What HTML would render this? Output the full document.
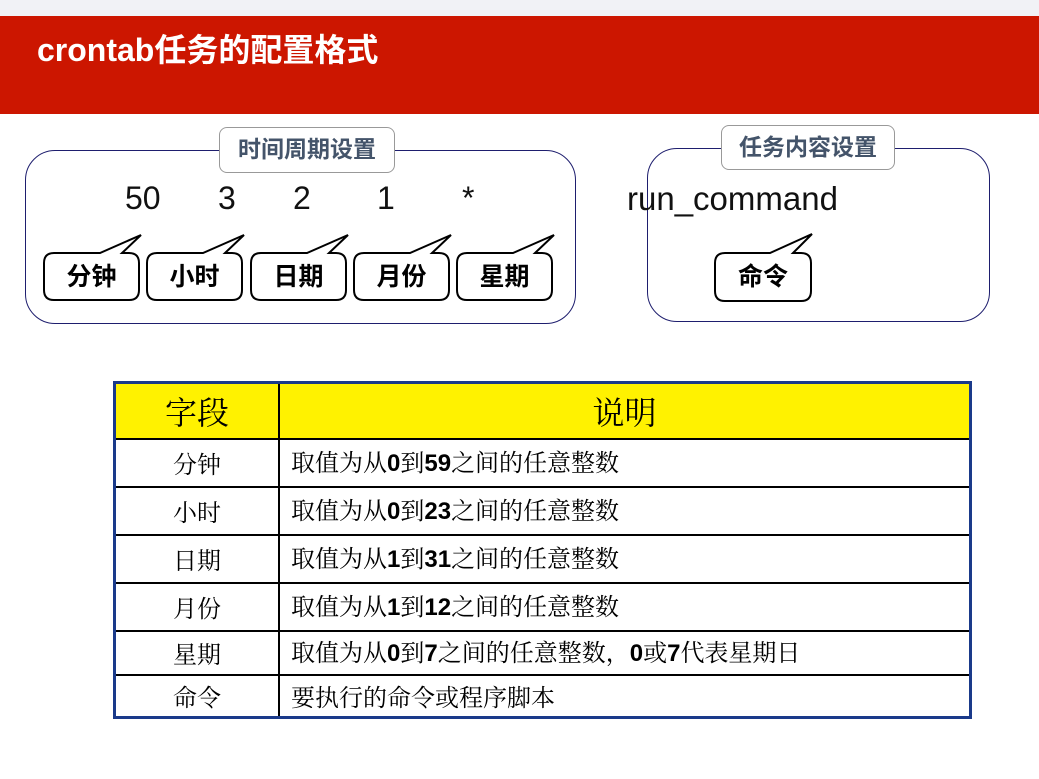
<!DOCTYPE html>
<html><head><meta charset="utf-8"><style>
body{margin:0;width:1039px;height:779px;background:#fff;position:relative;overflow:hidden;font-family:"Liberation Sans","Noto Sans CJK SC",sans-serif}
.a{position:absolute}
.top{left:0;top:0;width:1039px;height:16px;background:#f1f2f6}
.red{left:0;top:16px;width:1039px;height:98px;background:#cc1600}
.title{left:37px;top:25px;color:#fff;font-size:32px;font-weight:bold}
.box{border:1.5px solid #1e1e6e;border-radius:30px}
.lbl{background:#fff;border:1.5px solid #999;border-radius:8px;color:#44546a;font-size:23px;font-weight:bold;text-align:center;box-sizing:border-box;line-height:42px}
.num{font-size:32px;top:180px;color:#111}
.bt{font-size:25px;font-weight:bold;color:#000;top:257px;text-align:center;width:95px;font-family:"Noto Sans CJK SC",sans-serif}
table{position:absolute;left:113px;top:381px;width:859px;height:335px;border-collapse:collapse;border:3px solid #1a3a8a;font-family:"Noto Serif CJK SC","Liberation Serif",serif;font-size:24px;line-height:1}
td{border:2px solid #000;padding:0 0 0 11px}
td:first-child{text-align:center;width:162px;padding:0}
tr.h td{background:#fff200;font-size:32px;text-align:center;padding:0}
b{font-family:"Liberation Sans",sans-serif}
</style></head><body>
<div class="a top"></div><div class="a red"></div>
<div class="a title">crontab任务的配置格式</div>
<div class="a box" style="left:25px;top:150px;width:549px;height:172px"></div>
<div class="a lbl" style="left:219px;top:127px;width:176px;height:46px">时间周期设置</div>
<div class="a box" style="left:647px;top:148px;width:341px;height:172px"></div>
<div class="a lbl" style="left:721px;top:125px;width:174px;height:45px">任务内容设置</div>
<div class="a num" style="left:125px">50</div>
<div class="a num" style="left:218px">3</div>
<div class="a num" style="left:293px">2</div>
<div class="a num" style="left:377px">1</div>
<div class="a num" style="left:462px">*</div>
<div class="a num" style="left:627px;font-size:33px">run_command</div>
<svg class="a" style="left:0;top:0" width="1039" height="330">
<g fill="#fff" stroke="#000" stroke-width="2">
<path d="M54,253 H100 L141,235 L122,253 H129 Q139,253 139,263 V290 Q139,300 129,300 H54 Q44,300 44,290 V263 Q44,253 54,253Z"/>
<path d="M157,253 H203 L244,235 L225,253 H232 Q242,253 242,263 V290 Q242,300 232,300 H157 Q147,300 147,290 V263 Q147,253 157,253Z"/>
<path d="M261,253 H307 L348,235 L329,253 H336 Q346,253 346,263 V290 Q346,300 336,300 H261 Q251,300 251,290 V263 Q251,253 261,253Z"/>
<path d="M364,253 H410 L451,235 L432,253 H439 Q449,253 449,263 V290 Q449,300 439,300 H364 Q354,300 354,290 V263 Q354,253 364,253Z"/>
<path d="M467,253 H513 L554,235 L535,253 H542 Q552,253 552,263 V290 Q552,300 542,300 H467 Q457,300 457,290 V263 Q457,253 467,253Z"/>
<path d="M725,253 H770 L812,234 L793,253 H801 Q811,253 811,263 V291 Q811,301 801,301 H725 Q715,301 715,291 V263 Q715,253 725,253Z"/>
</g></svg>
<div class="a bt" style="left:44px">分钟</div>
<div class="a bt" style="left:147px">小时</div>
<div class="a bt" style="left:251px">日期</div>
<div class="a bt" style="left:354px">月份</div>
<div class="a bt" style="left:457px">星期</div>
<div class="a bt" style="left:715px;width:96px">命令</div>
<table>
<tr class="h" style="height:56px"><td>字段</td><td>说明</td></tr>
<tr style="height:48px"><td>分钟</td><td>取值为从<b>0</b>到<b>59</b>之间的任意整数</td></tr>
<tr style="height:48px"><td>小时</td><td>取值为从<b>0</b>到<b>23</b>之间的任意整数</td></tr>
<tr style="height:48px"><td>日期</td><td>取值为从<b>1</b>到<b>31</b>之间的任意整数</td></tr>
<tr style="height:48px"><td>月份</td><td>取值为从<b>1</b>到<b>12</b>之间的任意整数</td></tr>
<tr style="height:44px"><td>星期</td><td>取值为从<b>0</b>到<b>7</b>之间的任意整数，<b>0</b>或<b>7</b>代表星期日</td></tr>
<tr style="height:43px"><td>命令</td><td>要执行的命令或程序脚本</td></tr>
</table>
</body></html>
